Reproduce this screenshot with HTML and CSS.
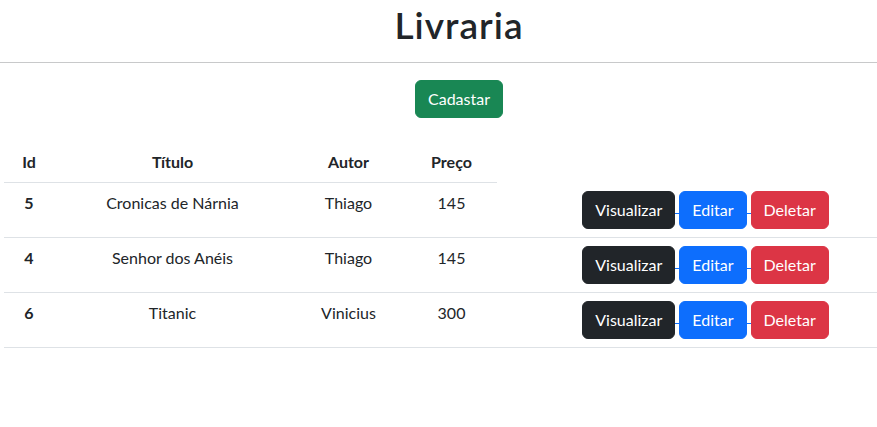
FILE: index.html
```html
<!DOCTYPE html>
<html lang="pt-BR">
<head>
<meta charset="utf-8">
<title>Livraria</title>
<link rel="stylesheet" href="styles.css">
</head>
<body>
<div class="page">
<h1 class="title">Livraria</h1>
<hr class="divider">
<div class="toolbar"><a class="btn btn-success" href="#">Cadastar</a></div>
<table class="books">
  <colgroup>
    <col class="c-id"><col class="c-title"><col class="c-author"><col class="c-price"><col class="c-actions">
  </colgroup>
  <thead>
    <tr><th>Id</th><th>Título</th><th>Autor</th><th>Preço</th></tr>
  </thead>
  <tbody>
    <tr>
      <th>5</th><td>Cronicas de Nárnia</td><td>Thiago</td><td>145</td>
      <td class="actions-cell"><div class="actions"><a class="btn btn-dark" href="#">Visualizar</a><span class="sep"></span><a class="btn btn-primary" href="#">Editar</a><span class="sep"></span><a class="btn btn-danger" href="#">Deletar</a></div></td>
    </tr>
    <tr>
      <th>4</th><td>Senhor dos Anéis</td><td>Thiago</td><td>145</td>
      <td class="actions-cell"><div class="actions"><a class="btn btn-dark" href="#">Visualizar</a><span class="sep"></span><a class="btn btn-primary" href="#">Editar</a><span class="sep"></span><a class="btn btn-danger" href="#">Deletar</a></div></td>
    </tr>
    <tr>
      <th>6</th><td>Titanic</td><td>Vinicius</td><td>300</td>
      <td class="actions-cell"><div class="actions"><a class="btn btn-dark" href="#">Visualizar</a><span class="sep"></span><a class="btn btn-primary" href="#">Editar</a><span class="sep"></span><a class="btn btn-danger" href="#">Deletar</a></div></td>
    </tr>
  </tbody>
</table>
</div>
</body>
</html>
```
FILE: styles.css
```css
html {
  overflow: hidden;
  background: #ffffff;
}
body {
  margin: 0;
  font-family: Lato, "Noto Sans", "Liberation Sans", sans-serif;
  font-size: 16px;
  line-height: 1.5;
  color: #212529;
}
.page {
  width: 918px;
}
.title {
  margin: 0;
  padding-top: 3px;
  text-align: center;
  font-size: 37px;
  line-height: 44px;
  font-weight: 600;
  letter-spacing: 1px;
  color: #212529;
}
.divider {
  margin: 15px 0 0;
  border: 0;
  border-top: 1px solid #c8c9ca;
  height: 0;
}
.toolbar {
  margin-top: 17px;
  margin-bottom: 24px;
  text-align: center;
}
.btn {
  display: inline-block;
  padding: 6px 12px;
  border: 1px solid transparent;
  border-radius: 6px;
  font-size: 16px;
  line-height: 24px;
  color: #ffffff;
  text-decoration: none;
  text-align: center;
  vertical-align: middle;
}
.btn-success { background: #198754; border-color: #198754; }
.btn-dark { background: #212529; border-color: #212529; }
.btn-primary { background: #0d6efd; border-color: #0d6efd; }
.btn-danger { background: #dc3545; border-color: #dc3545; }

.books {
  margin: 0 4px;
  width: calc(100% - 8px);
  border-collapse: collapse;
  table-layout: fixed;
  vertical-align: top;
}
.c-id { width: 50px; }
.c-title { width: 237px; }
.c-author { width: 115px; }
.c-price { width: 91px; }
.books th,
.books td {
  padding: 8px;
  border-bottom: 1px solid #dee2e6;
  text-align: center;
  vertical-align: top;
}
.books th {
  font-weight: 700;
}
.actions {
  display: flex;
  justify-content: center;
  align-items: center;
}
.sep {
  width: 4px;
  height: 1px;
  margin-top: 8px;
  background: #0d6efd;
}
```
